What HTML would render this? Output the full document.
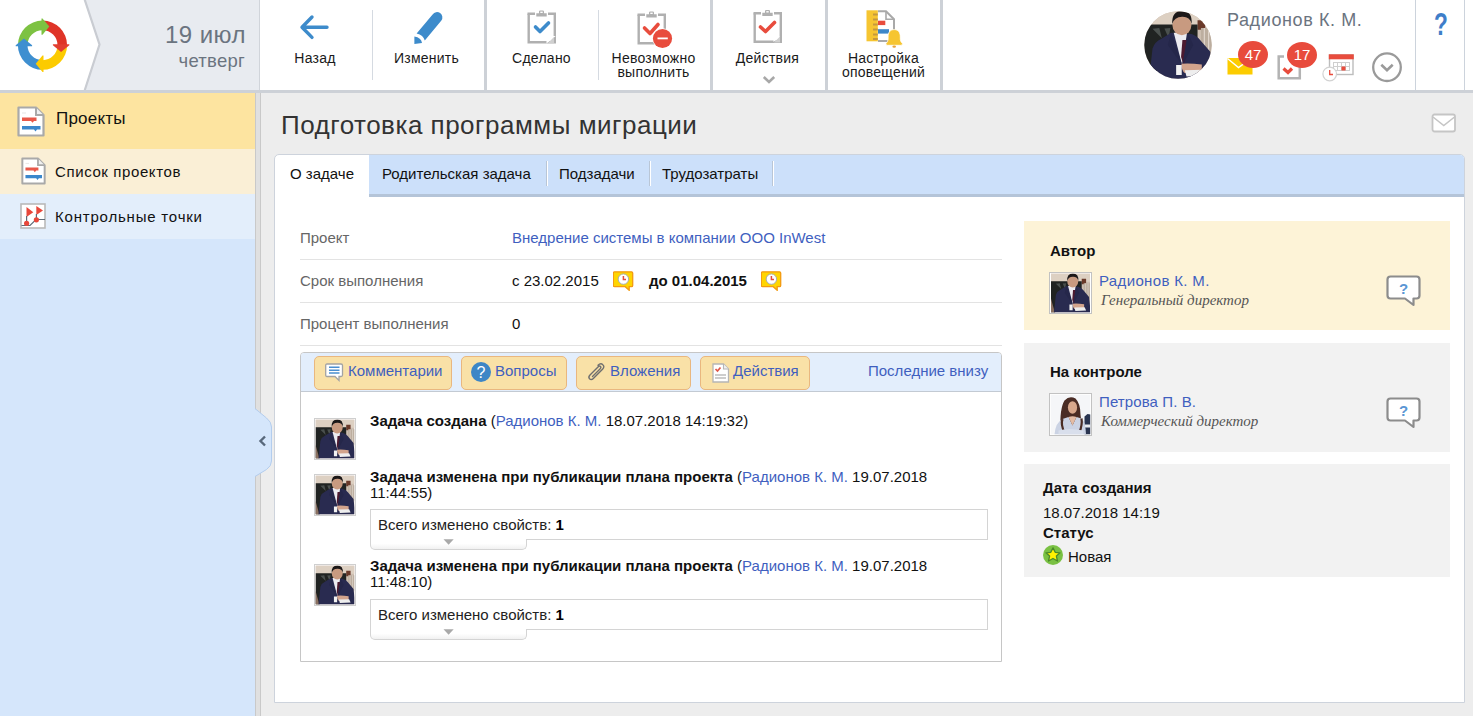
<!DOCTYPE html>
<html><head><meta charset="utf-8">
<style>
*{margin:0;padding:0;box-sizing:border-box}
html,body{width:1473px;height:716px;overflow:hidden;background:#ededed;font-family:"Liberation Sans",sans-serif;color:#000}
.a{position:absolute;white-space:nowrap;line-height:1}
svg.a{overflow:visible}
.vsep{position:absolute;width:1px;background:#d5dae1}
.gsep{position:absolute;top:0;height:90px;width:3px;background:#cdd1d7}
.tb{position:absolute;font-size:14px;color:#1a1a1a;text-align:center;line-height:14px;letter-spacing:0.25px;white-space:nowrap}
.lbl{position:absolute;font-size:15px;line-height:1;color:#666;white-space:nowrap}
.val{position:absolute;font-size:15px;line-height:1;color:#111;white-space:nowrap}
.lnk{color:#3f5fbf}
.rowsep{position:absolute;left:300px;width:702px;height:1px;background:#e3e3e3}
.btn{position:absolute;top:356px;height:34px;background:#f9e1a7;border:1px solid #e9b77f;border-radius:5px}
.bt{position:absolute;top:363px;font-size:15px;line-height:1;color:#3f5fbf;white-space:nowrap}
.ttl{position:absolute;font-size:15px;line-height:16px;color:#111;white-space:nowrap}
.chg{position:absolute;left:370px;width:618px;height:31px;background:#fff;border:1px solid #d4d4d4}
.chgtab{position:absolute;left:370px;width:157px;height:11px;background:linear-gradient(#fff 45%,#f1f1f1);border:1px solid #d4d4d4;border-top:none;border-radius:0 0 5px 5px}
.pnl{position:absolute;left:1024px;width:426px}
</style></head><body>
<svg width="0" height="0" style="position:absolute">
<defs>
 <symbol id="man" viewBox="0 0 40 40">
  <rect width="40" height="40" fill="#cdbfb2"/>
  <rect x="0" y="0" width="40" height="8.5" fill="#ddd0c2"/>
  <path d="M31.5 5.5 H36 V11 H31.5Z" fill="#6a3a2a"/>
  <path d="M33.5 10 H40 V26 H33.5Z" fill="#bcae9f"/>
  <path d="M35.5 10 V26 M38 10 V26" stroke="#e0d6cc" stroke-width="0.7"/>
  <path d="M0 8 H31.5 V16 L20 19 L4 40 H0Z" fill="#202322"/>
  <path d="M5 10.5 L9 10 L10.5 16 Z M12 10.3 L15.5 10 L14.5 16 Z" fill="#4a504e"/>
  <path d="M0 26 L4 40 H0Z" fill="#8a7060"/>
  <path d="M3 40 L5 22 Q6.5 18 10 16.5 L16 12.8 L28 13.5 Q31.5 15 33 17 L39 24 L40 33 L40 40 Z" fill="#292b50"/>
  <path d="M17.5 12.8 H25.3 L22.4 31.6 Z" fill="#ecebf0"/>
  <path d="M22.6 17 L25.2 17 L25 27 L23.2 31.6 L21.8 27 Z" fill="#4c1a30"/>
  <path d="M16 12.8 L22.4 31.6 L14 20Z M25.8 13 L22.6 31.6 L29 20Z" fill="#25274a"/>
  <ellipse cx="22.3" cy="8.3" rx="5.6" ry="6" fill="#c89a80"/>
  <path d="M16.6 7.6 Q16.2 0 22.4 0 Q28.6 0 28 7.6 Q27 3.2 22.4 3.4 Q17.8 3.6 16.6 7.6Z" fill="#1c1818"/>
  <path d="M22 31 Q27 30.5 34 31.5 L34 36 L24 36.5 Q22 35 22 31Z" fill="#d2a48c"/>
  <path d="M24 34.8 L34.5 34.5 L36 38 L25 38.5Z" fill="#eeeeee"/>
  <path d="M18.9 31.7 H22.2 V37.7 H18.9Z" fill="#f2f2f2"/>
 </symbol>
 <symbol id="woman" viewBox="0 0 40 40">
  <rect width="40" height="40" fill="#f5f6f8"/>
  <path d="M34 22 L37 19.5 L40 20 L40 40 L34 40 Z" fill="#2a3550"/>
  <path d="M34.5 30 H40 V33 H34.5Z" fill="#e8eaee"/>
  <path d="M10 36 Q9 14 14 6 Q19 0.5 25 4 Q30 9 30 20 Q31 30 33 36 Z" fill="#4a2c24"/>
  <ellipse cx="22" cy="13" rx="4.6" ry="6.2" fill="#d8a88c"/>
  <path d="M4 40 Q5 28 12 24.5 L18 22.5 L22 31 L26 22.5 L31 24 Q35 27 35.5 40 Z" fill="#cbd3e4"/>
  <path d="M18 22.5 L22 31 L26 22.5 Q22 21 18 22.5Z" fill="#e3bca5"/>
  <path d="M12 24.5 Q10 30 14 38 M31 24 Q32 30 29 38" fill="none" stroke="#4a2c24" stroke-width="2.2"/>
  <path d="M8 36 Q18 33 33 36 V40 H8Z" fill="#d9dfec"/>
 </symbol>
 <symbol id="qbub" viewBox="0 0 36 32">
  <path d="M4.5 1.5 H30.5 Q33.5 1.5 33.5 4.5 V20.5 Q33.5 23.5 30.5 23.5 H27.5 V30 L19 23.5 H4.5 Q1.5 23.5 1.5 20.5 V4.5 Q1.5 1.5 4.5 1.5Z" fill="#fff" stroke="#8c8c8c" stroke-width="2.2" stroke-linejoin="round"/>
  <text x="17.6" y="19.3" text-anchor="middle" font-family="Liberation Sans" font-weight="bold" font-size="15" fill="#5a96d4">?</text>
 </symbol>
 <symbol id="clk" viewBox="0 0 21 20">
  <path d="M1.5 0.8 H18.5 Q19.7 0.8 19.7 2 V14.5 Q19.7 15.7 18.5 15.7 H16.2 V19.3 L12.2 15.7 H1.5 Q0.3 15.7 0.3 14.5 V2 Q0.3 0.8 1.5 0.8Z" fill="#ffd500" stroke="#f39a10" stroke-width="1.3"/>
  <circle cx="10.4" cy="8.1" r="5.2" fill="#fff" stroke="#9ea7b3" stroke-width="0.9"/>
  <path d="M10.4 5 V8.6 H13" fill="none" stroke="#e44b3c" stroke-width="1.5"/>
 </symbol>
 <symbol id="doc" viewBox="0 0 28 31">
  <path d="M1.5 1.5 H19 L26.5 9 V29.5 H1.5 Z" fill="#fff" stroke="#a9a9a9" stroke-width="2.2" stroke-linejoin="round"/>
  <path d="M19 1.5 V9 H26.5" fill="#f0f0f0" stroke="#a9a9a9" stroke-width="2"/>
  <path d="M5 11.5 H19.5 V15 H17 L15.5 16.8 L14 15 H5Z" fill="#e8584a"/>
  <path d="M5 20 H23.5 V23.6 H20 L18.5 25.5 L17 23.6 H5Z" fill="#3a87cc"/>
  <path d="M5 7 H9" stroke="#e5e5e5" stroke-width="1"/>
 </symbol>
 <symbol id="clip" viewBox="0 0 30 35">
  <path d="M1.7 3.8 V32.3 H27.8 V3.8" fill="#fff" stroke="#b0b0b0" stroke-width="2.4"/>
  <path d="M0.5 2.6 H8 V5 H0.5Z M21 2.6 H29 V5 H21Z" fill="#b0b0b0"/>
  <path d="M9.3 3.2 H19.7 V6.6 H9.3 Z M12 3.2 V1.6 Q12 0.4 13.2 0.4 H15.8 Q17 0.4 17 1.6 V3.2Z" fill="#b0b0b0"/>
  <rect x="13.3" y="1.6" width="2.4" height="1.4" fill="#fff"/>
 </symbol>
</defs>
</svg>

<!-- ============ HEADER ============ -->
<div class="a" style="left:0;top:0;width:1473px;height:90px;background:#fff"></div>
<div class="a" style="left:84px;top:0;width:175px;height:90px;background:#e8ebf0"></div>
<svg class="a" style="left:0;top:0" width="110" height="91">
  <polygon points="0,0 84,0 99.5,44.5 84,90 0,90" fill="#fff"/>
  <polyline points="84.5,-1 99.5,44.5 84.5,91" fill="none" stroke="#c9ccd2" stroke-width="2.2"/>
</svg>
<!-- logo -->
<svg class="a" style="left:13px;top:17px" width="60" height="56" viewBox="0 0 60 56">
  <g transform="translate(29.5,28.2)">
   <path d="M-24.6 0 A24.6 24.6 0 0 1 0 -24.6 L0 -15 A15 15 0 0 0 -15 0 Z" fill="#7dc242"/>
   <path d="M0 -24.6 A24.6 24.6 0 0 1 24.6 0 L15 0 A15 15 0 0 0 0 -15 Z" fill="#df3427"/>
   <path d="M24.6 0 A24.6 24.6 0 0 1 0 24.6 L0 15 A15 15 0 0 0 15 0 Z" fill="#fccb00"/>
   <path d="M0 24.6 A24.6 24.6 0 0 1 -24.6 0 L-15 0 A15 15 0 0 0 0 15 Z" fill="#3e8fd0"/>
   <path d="M-1 -26.8 L0 -26.8 L6.8 -18.6 L0 -10.4 L-1 -10.4Z" fill="#7dc242"/>
   <path d="M26.8 -1 L26.8 0 L18.6 6.8 L10.4 0 L10.4 -1Z" fill="#e23e30"/>
   <path d="M1 26.8 L0 26.8 L-6.8 18.6 L0 10.4 L1 10.4Z" fill="#fccb00"/>
   <path d="M-26.8 1 L-26.8 0 L-18.6 -6.8 L-10.4 0 L-10.4 1Z" fill="#3e8fd0"/>
  </g>
</svg>
<div class="a" style="left:259px;top:0;width:1px;height:90px;background:#d0d4da"></div>
<div class="a" style="left:146px;top:23px;width:100px;text-align:right;font-size:24px;color:#6b7480;letter-spacing:0.45px">19 июл</div>
<div class="a" style="left:140px;top:52px;width:105px;text-align:right;font-size:18.5px;color:#6b7480;letter-spacing:0.25px">четверг</div>

<!-- toolbar separators -->
<div class="vsep" style="left:372px;top:10px;height:70px"></div>
<div class="gsep" style="left:484px"></div>
<div class="vsep" style="left:598px;top:10px;height:70px"></div>
<div class="gsep" style="left:710px"></div>
<div class="gsep" style="left:825px"></div>
<div class="gsep" style="left:940px"></div>

<!-- toolbar icons -->
<svg class="a" style="left:299px;top:14px" width="32" height="26" viewBox="0 0 32 26">
  <path d="M28 13.2 H4 M13 3 L3 13.2 L13 23.4" fill="none" stroke="#3d8bcb" stroke-width="3.4" stroke-linecap="round" stroke-linejoin="round"/>
</svg>
<svg class="a" style="left:405px;top:5px" width="45" height="45" viewBox="405 5 45 45">
  <path d="M416.6 33.4 L432.6 14.4 A5.2 5.2 0 0 1 441.4 20.6 L424.8 40.6 Q423.4 35 416.6 33.4 Z" fill="#3d8bcb"/>
  <path d="M414.4 36.4 L414.4 43.9 L422 42.9 Q421.2 37.4 414.4 36.4 Z" fill="#3d8bcb"/>
</svg>
<!-- Сделано -->
<svg class="a" style="left:527px;top:10px" width="30" height="35" viewBox="0 0 30 35">
  <use href="#clip"/>
  <path d="M8.5 17 L13 21.5 L21.5 13" fill="none" stroke="#3d8bcb" stroke-width="3.6" stroke-linecap="round" stroke-linejoin="round"/>
  <path d="M19.5 33.4 V26 H28.7" fill="#fff" stroke="#b0b0b0" stroke-width="0"/>
  <path d="M20.5 26.5 H27 L20.5 32.5Z" fill="#fff"/>
  <path d="M27 27 L21 33 H27Z" fill="#d0d0d0"/>
</svg>
<!-- Невозможно -->
<svg class="a" style="left:637px;top:10px" width="36" height="40" viewBox="0 0 36 40">
  <use href="#clip" width="30" height="35" x="0" y="1"/>
  <path d="M7.5 18 L13 23.5 L21 14.5" fill="none" stroke="#e84c3d" stroke-width="3.6" stroke-linecap="round" stroke-linejoin="round"/>
  <circle cx="25.5" cy="28.5" r="10.3" fill="#fff"/>
  <circle cx="25.5" cy="28.5" r="9.6" fill="#e84c3d"/>
  <rect x="20.5" y="27.5" width="10.3" height="1.8" fill="#fff"/>
</svg>
<!-- Действия -->
<svg class="a" style="left:753px;top:9px" width="30" height="36" viewBox="0 0 30 35">
  <use href="#clip"/>
  <path d="M7.5 17.5 L12.5 22 L21.5 13" fill="none" stroke="#e84c3d" stroke-width="3.6" stroke-linecap="round" stroke-linejoin="round"/>
  <path d="M20.5 26.5 H27 L20.5 32.5Z" fill="#fff"/>
  <path d="M27 27 L21 33 H27Z" fill="#d0d0d0"/>
</svg>
<svg class="a" style="left:762px;top:75px" width="14" height="10" viewBox="0 0 14 10">
  <path d="M1.8 2 L7 7 L12.2 2" fill="none" stroke="#a8a8a8" stroke-width="2.6"/>
</svg>
<!-- Настройка оповещений -->
<svg class="a" style="left:866px;top:10px" width="38" height="38" viewBox="0 0 38 38">
  <path d="M12 1.2 H20 L28 9.2 V31 H12" fill="#fff" stroke="#a9a9a9" stroke-width="2"/>
  <path d="M20 1.2 V9.2 H28" fill="none" stroke="#a9a9a9" stroke-width="1.6"/>
  <rect x="0.5" y="0.3" width="11.3" height="31" fill="#f6c531"/>
  <g fill="#c5993f"><rect x="7" y="3.5" width="4.8" height="2"/><rect x="7" y="8.5" width="4.8" height="2"/><rect x="7" y="13.5" width="4.8" height="2"/><rect x="7" y="18.5" width="4.8" height="2"/><rect x="7" y="23.5" width="4.8" height="2"/><rect x="7" y="28" width="4.8" height="2"/></g>
  <rect x="12" y="10.7" width="7.3" height="4.4" fill="#e84c3d"/>
  <rect x="12" y="19.2" width="11" height="4.4" fill="#3d87c8"/>
  <path d="M28.2 19.6 C32.8 19.6 34.3 23 34.3 27 L34.3 29.5 Q34.6 32 36.4 33.3 Q37 35.3 34.8 35.3 L21.6 35.3 Q19.4 35.3 20 33.3 Q21.8 32 22.1 29.5 L22.1 27 C22.1 23 23.6 19.6 28.2 19.6Z" fill="#f6c531" stroke="#fff" stroke-width="0.8"/>
  <ellipse cx="28.2" cy="36.6" rx="1.8" ry="1.2" fill="#e8a33a"/>
</svg>

<div class="tb" style="left:275px;top:51px;width:80px">Назад</div>
<div class="tb" style="left:384px;top:51px;width:85px">Изменить</div>
<div class="tb" style="left:499px;top:51px;width:85px">Сделано</div>
<div class="tb" style="left:604px;top:51px;width:99px">Невозможно<br>выполнить</div>
<div class="tb" style="left:725px;top:51px;width:85px">Действия</div>
<div class="tb" style="left:834px;top:51px;width:99px">Настройка<br>оповещений</div>

<!-- user area -->
<svg class="a" style="left:1144px;top:11px" width="68" height="68" viewBox="0 0 68 68">
  <defs><clipPath id="cc"><circle cx="34" cy="34" r="33.7"/></clipPath></defs>
  <g clip-path="url(#cc)"><use href="#man" width="68" height="68"/></g>
</svg>
<div class="a" style="left:1227px;top:11px;font-size:18px;color:#6b7480;letter-spacing:0.6px">Радионов К. М.</div>
<!-- mail -->
<svg class="a" style="left:1227px;top:57px" width="26" height="18" viewBox="0 0 26 18">
  <rect x="0.5" y="1" width="25" height="16.5" fill="#fccc00"/>
  <path d="M0.5 1.5 L11.5 10.5 L24 1.5" fill="none" stroke="#fff" stroke-width="1.4"/>
</svg>
<div class="a" style="left:1238px;top:41px;width:30px;height:27px;border-radius:50%;background:#e84b3c;color:#fff;font-size:15px;line-height:27px;text-align:center">47</div>
<!-- tasks -->
<svg class="a" style="left:1277px;top:55px" width="25" height="25" viewBox="0 0 25 25">
  <path d="M7 1.5 H1.7 V23.2 H22.8 V12" fill="none" stroke="#b3b3b3" stroke-width="2.5"/>
  <path d="M6.5 13.5 L11 17.5 L15 13.5" fill="none" stroke="#e84c3d" stroke-width="3.2" stroke-linejoin="miter"/>
</svg>
<div class="a" style="left:1287px;top:42px;width:30px;height:26px;border-radius:50%;background:#e84b3c;color:#fff;font-size:15px;line-height:26px;text-align:center">17</div>
<!-- calendar -->
<svg class="a" style="left:1321px;top:54px" width="34" height="29" viewBox="0 0 34 29">
  <rect x="8.5" y="1" width="23.5" height="19.5" fill="#fff" stroke="#bdbdbd" stroke-width="1.4"/>
  <rect x="7.8" y="0.3" width="25" height="5" fill="#e84c3d"/>
  <g fill="none" stroke="#cfcfcf" stroke-width="1"><rect x="12.5" y="8.5" width="16" height="8"/><path d="M16.5 8.5 V16.5 M20.5 8.5 V16.5 M24.5 8.5 V16.5 M12.5 12.5 H28.5"/></g>
  <rect x="20.5" y="12.5" width="4" height="4" fill="#e84c3d"/>
  <circle cx="8.7" cy="20" r="6.8" fill="#fff" stroke="#d2d2d2" stroke-width="1.2"/>
  <path d="M8.7 16 V20.5 H12" fill="none" stroke="#e84c3d" stroke-width="1.3"/>
</svg>
<!-- chevron circle -->
<svg class="a" style="left:1371px;top:51px" width="32" height="32" viewBox="0 0 32 32">
  <circle cx="16" cy="16.2" r="13.8" fill="none" stroke="#9a9a9a" stroke-width="2.3"/>
  <path d="M10.3 13.8 L16 19.3 L21.7 13.8" fill="none" stroke="#9a9a9a" stroke-width="2.6"/>
</svg>
<div class="a" style="left:1415px;top:0;width:1px;height:90px;background:#ccd3dc"></div>
<div class="a" style="left:1464px;top:0;width:1px;height:90px;background:#ccd3dc"></div>
<div class="a" style="left:1431px;top:9px;width:20px;text-align:center;font-size:31px;font-weight:bold;color:#3e7ec9;transform:scaleX(0.73)">?</div>

<div class="a" style="left:0;top:90px;width:1473px;height:3px;background:#cdd1d7"></div>

<!-- ============ SIDEBAR ============ -->
<div class="a" style="left:0;top:93px;width:255px;height:623px;background:#d5e6fb"></div>
<div class="a" style="left:0;top:93px;width:255px;height:56px;background:#fde4a0"></div>
<div class="a" style="left:0;top:149px;width:255px;height:45px;background:#faefd6"></div>
<div class="a" style="left:0;top:194px;width:255px;height:45px;background:#e3eefb"></div>
<svg class="a" style="left:17px;top:106px" width="28" height="31"><use href="#doc" width="28" height="31"/></svg>
<svg class="a" style="left:21px;top:157px" width="25" height="28"><use href="#doc" width="25" height="28"/></svg>
<svg class="a" style="left:20px;top:203px" width="26" height="26" viewBox="0 0 26 26">
  <rect x="1" y="1" width="24" height="24" fill="#fff" stroke="#b9b9b9" stroke-width="1.6"/>
  <path d="M1.5 22.5 H10 L16 16.5 H25" fill="none" stroke="#5d6b78" stroke-width="1.2"/>
  <path d="M6.5 21 V4 L13.3 9.2 L6.5 14" fill="#e8473a" stroke="#5d6b78" stroke-width="0"/>
  <rect x="6" y="13" width="1.2" height="8" fill="#5d6b78"/>
  <path d="M16.3 3 L23 7.5 L16.3 12Z" fill="#e8473a"/>
  <rect x="15.8" y="11" width="1.2" height="6" fill="#5d6b78"/>
  <circle cx="6.6" cy="20.3" r="2.6" fill="#e8473a"/>
  <circle cx="16.4" cy="16.8" r="2.6" fill="#e8473a"/>
</svg>
<div class="a" style="left:56px;top:110px;font-size:17px;color:#111;letter-spacing:0.2px">Проекты</div>
<div class="a" style="left:55px;top:164px;font-size:15px;color:#111;letter-spacing:0.6px">Список проектов</div>
<div class="a" style="left:55px;top:209px;font-size:15px;color:#111;letter-spacing:0.8px">Контрольные точки</div>
<!-- splitter -->
<div class="a" style="left:255px;top:93px;width:6px;height:623px;background:#e0e0e0;border-left:1px solid #c9c9c9;border-right:1px solid #c9c9c9"></div>
<svg class="a" style="left:254px;top:407px" width="20" height="72" viewBox="0 0 20 72">
  <path d="M0 1 L12.5 11 Q17.5 15 17.5 20 V54 Q17.5 59 12.5 62.5 L0 70 Z" fill="#d5e6fb"/>
  <path d="M1 1.5 L12.5 11 Q17.5 15 17.5 20 V54 Q17.5 59 12.5 62.5 L1 69.5" fill="none" stroke="#b3cdee" stroke-width="1"/>
  <path d="M11 29.5 L6.5 34 L11 38.5" fill="none" stroke="#58687b" stroke-width="2.4"/>
</svg>

<!-- ============ MAIN ============ -->
<div class="a" style="left:281px;top:112px;font-size:26px;color:#333;letter-spacing:0.5px">Подготовка программы миграции</div>
<svg class="a" style="left:1431px;top:113px" width="26" height="20" viewBox="0 0 26 20">
  <rect x="1.5" y="1.5" width="22.5" height="17" rx="2" fill="#fff" stroke="#c5c5c5" stroke-width="1.8"/>
  <path d="M2 4 L12.75 12.6 L23.5 4" fill="none" stroke="#c5c5c5" stroke-width="1.6"/>
</svg>

<div class="a" style="left:274px;top:154px;width:1191px;height:549px;background:#fff;border:1px solid #cdd3dc;border-radius:5px 5px 0 0"></div>
<div class="a" style="left:369px;top:155px;width:1095px;height:39px;background:#cce0fa;border-radius:0 4px 0 0"></div>
<div class="a" style="left:369px;top:194px;width:1095px;height:3px;background:#b4c4d8"></div>
<div class="a" style="left:547px;top:161px;width:1px;height:25px;background:#fff;box-shadow:-1px 0 0 #b9c6d6"></div>
<div class="a" style="left:650px;top:161px;width:1px;height:25px;background:#fff;box-shadow:-1px 0 0 #b9c6d6"></div>
<div class="a" style="left:773px;top:161px;width:1px;height:25px;background:#fff;box-shadow:-1px 0 0 #b9c6d6"></div>
<div class="a" style="left:290px;top:166px;font-size:15px;color:#111">О задаче</div>
<div class="a" style="left:382px;top:166px;font-size:15px;color:#111">Родительская задача</div>
<div class="a" style="left:559px;top:166px;font-size:15px;color:#111">Подзадачи</div>
<div class="a" style="left:662px;top:166px;font-size:15px;color:#111">Трудозатраты</div>

<div class="lbl" style="left:300px;top:230px">Проект</div>
<div class="lbl" style="left:300px;top:273px">Срок выполнения</div>
<div class="lbl" style="left:300px;top:316px">Процент выполнения</div>
<div class="rowsep" style="top:259px"></div>
<div class="rowsep" style="top:302px"></div>
<div class="rowsep" style="top:345px"></div>
<div class="val lnk" style="left:512px;top:230px">Внедрение системы в компании ООО InWest</div>
<div class="val" style="left:512px;top:273px">с 23.02.2015</div>
<svg class="a" style="left:613px;top:271px" width="21" height="20"><use href="#clk" width="21" height="20"/></svg>
<div class="val" style="left:649px;top:273px;font-weight:bold">до 01.04.2015</div>
<svg class="a" style="left:761px;top:271px" width="21" height="20"><use href="#clk" width="21" height="20"/></svg>
<div class="val" style="left:512px;top:316px">0</div>

<!-- comments box -->
<div class="a" style="left:300px;top:352px;width:702px;height:310px;background:#fff;border:1px solid #c6c6c6;border-radius:4px 4px 0 0"></div>
<div class="a" style="left:301px;top:353px;width:700px;height:39px;background:#e3eefc;border-bottom:1px solid #c3cad3;border-radius:3px 3px 0 0"></div>
<div class="btn" style="left:314px;width:138px"></div>
<div class="btn" style="left:461px;width:106px"></div>
<div class="btn" style="left:576px;width:115px"></div>
<div class="btn" style="left:700px;width:110px"></div>
<svg class="a" style="left:325px;top:363px" width="19" height="19" viewBox="0 0 19 19">
  <path d="M2 1 H16 Q17.5 1 17.5 2.5 V12 Q17.5 13.5 16 13.5 H14 V17.5 L10 13.5 H2 Q0.7 13.5 0.7 12 V2.5 Q0.7 1 2 1Z" fill="#fff" stroke="#a3a3a3" stroke-width="1.3"/>
  <path d="M4 4.3 H14.5 M4 7.2 H14.5 M4 10 H14.5" stroke="#4a8ed0" stroke-width="1.5"/>
</svg>
<div class="bt" style="left:348px">Комментарии</div>
<svg class="a" style="left:470px;top:361px" width="22" height="22" viewBox="0 0 22 22">
  <circle cx="11" cy="11" r="10" fill="#3d86c6"/>
  <text x="11" y="16.5" text-anchor="middle" font-family="Liberation Sans" font-size="16" fill="#fff">?</text>
</svg>
<div class="bt" style="left:495px">Вопросы</div>
<svg class="a" style="left:587px;top:363px" width="19" height="19" viewBox="0 0 19 19">
  <path d="M5.5 13.5 L13 6 Q14.5 4.5 13.5 3.5 Q12.5 2.5 11 4 L3 12 Q1 14 2.5 15.8 Q4.3 17.5 6.3 15.5 L15.5 6.3 Q18 3.5 15.8 1.7 Q13.7 -0.3 11 2.3" fill="none" stroke="#6f6f6f" stroke-width="1.4" stroke-linecap="round"/>
</svg>
<div class="bt" style="left:610px">Вложения</div>
<svg class="a" style="left:712px;top:363px" width="18" height="20" viewBox="0 0 18 20">
  <path d="M1 1 H11.5 L16.5 6 V19 H1Z" fill="#fff" stroke="#b5b5b5" stroke-width="1.3"/>
  <path d="M11.5 1 V6 H16.5" fill="#f0f0f0" stroke="#b5b5b5" stroke-width="1.1"/>
  <path d="M3.5 6 L5.5 8 L8.5 4.5" fill="none" stroke="#e0574a" stroke-width="1.7"/>
  <path d="M3 12 H14 M3 15 H14" stroke="#bdbdbd" stroke-width="1.4"/>
</svg>
<div class="bt" style="left:733px">Действия</div>
<div class="bt" style="left:868px">Последние внизу</div>

<!-- timeline -->
<svg class="a" style="left:314px;top:418px" width="42" height="42"><rect x="0.5" y="0.5" width="41" height="41" fill="#fff" stroke="#cfcfcf"/><use href="#man" x="1.5" y="1.5" width="39" height="39"/></svg>
<div class="ttl" style="left:370px;top:413px"><b>Задача создана</b> (<span class="lnk">Радионов К. М.</span> 18.07.2018 14:19:32)</div>

<svg class="a" style="left:314px;top:474px" width="42" height="42"><rect x="0.5" y="0.5" width="41" height="41" fill="#fff" stroke="#cfcfcf"/><use href="#man" x="1.5" y="1.5" width="39" height="39"/></svg>
<div class="ttl" style="left:370px;top:469px"><b>Задача изменена при публикации плана проекта</b> (<span class="lnk">Радионов К. М.</span> 19.07.2018<br>11:44:55)</div>
<div class="chg" style="top:509px"></div>
<div class="chgtab" style="top:539px"></div>
<div class="a" style="left:378px;top:517px;font-size:15px;color:#222">Всего изменено свойств: <b style="color:#000">1</b></div>
<svg class="a" style="left:443px;top:539px" width="12" height="7"><path d="M0.5 0.3 H10.7 L5.6 5.8Z" fill="#a9a9a9"/></svg>

<svg class="a" style="left:314px;top:564px" width="42" height="42"><rect x="0.5" y="0.5" width="41" height="41" fill="#fff" stroke="#cfcfcf"/><use href="#man" x="1.5" y="1.5" width="39" height="39"/></svg>
<div class="ttl" style="left:370px;top:558px"><b>Задача изменена при публикации плана проекта</b> (<span class="lnk">Радионов К. М.</span> 19.07.2018<br>11:48:10)</div>
<div class="chg" style="top:599px"></div>
<div class="chgtab" style="top:629px"></div>
<div class="a" style="left:378px;top:607px;font-size:15px;color:#222">Всего изменено свойств: <b style="color:#000">1</b></div>
<svg class="a" style="left:443px;top:629px" width="12" height="7"><path d="M0.5 0.3 H10.7 L5.6 5.8Z" fill="#a9a9a9"/></svg>

<!-- right panels -->
<div class="pnl" style="top:221px;height:109px;background:#fdf3d7"></div>
<div class="a" style="left:1050px;top:243px;font-size:15px;font-weight:bold;color:#111">Автор</div>
<svg class="a" style="left:1049px;top:272px" width="43" height="42"><rect x="0.5" y="0.5" width="42" height="41" fill="#fff" stroke="#c2c2c2"/><use href="#man" x="1.5" y="1.5" width="40" height="39"/></svg>
<div class="a lnk" style="left:1099px;top:273px;font-size:15px;letter-spacing:0.35px">Радионов К. М.</div>
<div class="a" style="left:1101px;top:293px;font-family:'Liberation Serif',serif;font-style:italic;font-size:15px;color:#555">Генеральный директор</div>
<svg class="a" style="left:1386px;top:275px" width="36" height="32"><use href="#qbub" width="36" height="32"/></svg>

<div class="pnl" style="top:343px;height:109px;background:#f2f2f2"></div>
<div class="a" style="left:1050px;top:364px;font-size:15px;font-weight:bold;color:#111">На контроле</div>
<svg class="a" style="left:1049px;top:393px" width="43" height="43"><rect x="0.5" y="0.5" width="42" height="42" fill="#fff" stroke="#c2c2c2"/><use href="#woman" x="1.5" y="1.5" width="40" height="40"/></svg>
<div class="a lnk" style="left:1099px;top:394px;font-size:15px;letter-spacing:0.1px">Петрова П. В.</div>
<div class="a" style="left:1101px;top:414px;font-family:'Liberation Serif',serif;font-style:italic;font-size:15px;color:#555">Коммерческий директор</div>
<svg class="a" style="left:1386px;top:397px" width="36" height="32"><use href="#qbub" width="36" height="32"/></svg>

<div class="pnl" style="top:464px;height:113px;background:#f2f2f2"></div>
<div class="a" style="left:1043px;top:480px;font-size:15px;font-weight:bold;color:#111">Дата создания</div>
<div class="a" style="left:1043px;top:505px;font-size:15px;color:#111">18.07.2018 14:19</div>
<div class="a" style="left:1043px;top:525px;font-size:15px;font-weight:bold;color:#111">Статус</div>
<svg class="a" style="left:1043px;top:545px" width="20" height="20" viewBox="0 0 20 20">
  <circle cx="10" cy="10" r="10" fill="#7ac143"/>
  <path d="M10 2.9 L12.2 7.3 L17 7.8 L13.4 11.1 L14.5 16 L10 13.5 L5.5 16 L6.6 11.1 L3 7.8 L7.8 7.3Z" fill="#fff200" stroke="#4a8a2a" stroke-width="1.3" stroke-linejoin="round"/>
</svg>
<div class="a" style="left:1068px;top:549px;font-size:15px;color:#111">Новая</div>

</body></html>
